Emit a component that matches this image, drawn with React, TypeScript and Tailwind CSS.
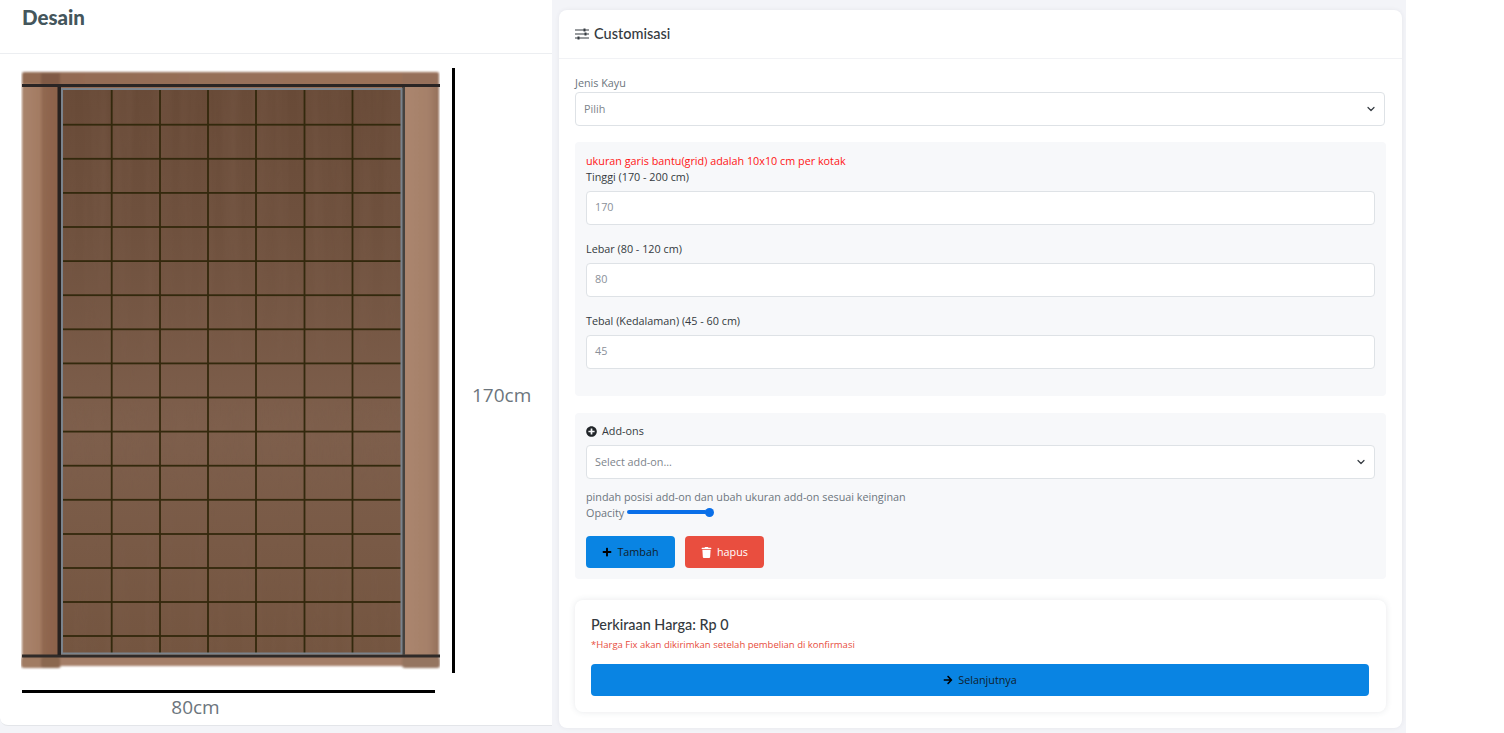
import { FaArrowRight, FaPlus, FaPlusCircle, FaTrash } from 'react-icons/fa'

const bodyFont = "font-['Open_Sans',sans-serif]"
const headFont = "font-['Lato',sans-serif]"

const gridX = [111.7, 160, 208, 256, 304.5, 352.5]
const gridY = [124.7, 158.8, 192.9, 227, 261.1, 295.2, 329.3, 363.4, 397.5, 431.6, 465.7, 499.8, 534, 568, 602, 636]

function Chevron() {
  return (
    <svg width="8" height="8" viewBox="0 0 16 16" fill="none" className="text-[#343a40]">
      <path d="M2 5l6 6 6-6" stroke="currentColor" strokeWidth="2.4" strokeLinecap="round" strokeLinejoin="round" />
    </svg>
  )
}

function Wardrobe() {
  return (
    <svg width="419" height="605" viewBox="21 68 419 605" className="shrink-0">
      <defs>
        <filter id="grain" x="0" y="0" width="100%" height="100%">
          <feTurbulence type="fractalNoise" baseFrequency="0.07 0.003" numOctaves="3" seed="7" />
          <feColorMatrix values="0 0 0 0 0.2  0 0 0 0 0.11  0 0 0 0 0.07  1.4 0 0 0 -0.45" />
        </filter>
        <filter id="soft">
          <feGaussianBlur stdDeviation="1" />
        </filter>
        <linearGradient id="panel" x1="0" y1="0" x2="0" y2="1">
          <stop offset="0" stopColor="#684a37" />
          <stop offset="0.25" stopColor="#6f513e" />
          <stop offset="0.6" stopColor="#7e5f4c" />
          <stop offset="1" stopColor="#745540" />
        </linearGradient>
        <linearGradient id="sideLeft" x1="0" y1="0" x2="1" y2="0">
          <stop offset="0" stopColor="#a9846c" />
          <stop offset="0.48" stopColor="#a37b62" />
          <stop offset="0.55" stopColor="#916850" />
          <stop offset="1" stopColor="#8a604a" />
        </linearGradient>
        <linearGradient id="sideRight" x1="0" y1="0" x2="1" y2="0">
          <stop offset="0" stopColor="#ab866f" />
          <stop offset="0.7" stopColor="#a58069" />
          <stop offset="1" stopColor="#94705a" />
        </linearGradient>
        <linearGradient id="topBand" x1="0" y1="0" x2="1" y2="0">
          <stop offset="0" stopColor="#926a51" />
          <stop offset="0.5" stopColor="#97705a" />
          <stop offset="1" stopColor="#9c7259" />
        </linearGradient>
      </defs>

      <g filter="url(#soft)">
        <rect x="22" y="72" width="417" height="594" rx="2" fill="url(#topBand)" />
        <rect x="22" y="84" width="38" height="572" fill="url(#sideLeft)" />
        <rect x="404" y="84" width="35" height="572" fill="url(#sideRight)" />
        <rect x="41" y="73" width="19" height="12" fill="#805a44" />
        <rect x="402" y="73" width="37" height="12" fill="#96705a" />
        <rect x="60" y="657" width="343" height="9" fill="#a47e67" />
        <rect x="21" y="657" width="40" height="11" rx="3" fill="#a17c64" />
        <rect x="41" y="657" width="19" height="11" rx="3" fill="#8b6750" />
        <rect x="402" y="657" width="38" height="11" rx="3" fill="#957460" />
      </g>

      <rect x="22" y="84" width="418" height="3" fill="#2a2524" />
      <rect x="22" y="654.5" width="418" height="3" fill="#2f2a28" />
      <rect x="57.5" y="87" width="3.5" height="568" fill="#27211f" />
      <rect x="402" y="87" width="3" height="568" fill="#46423f" />

      <rect x="63" y="90" width="338" height="564" fill="url(#panel)" />
      <rect x="63" y="90" width="338" height="564" filter="url(#grain)" opacity="0.45" />

      {gridX.map((x) => (
        <rect key={x} x={x - 0.9} y="90" width="1.8" height="564" fill="#33290d" />
      ))}
      {gridY.map((y) => (
        <rect key={y} x="63" y={y - 0.9} width="338" height="1.8" fill="#33290d" />
      ))}

      <rect x="62" y="89" width="339.5" height="564.5" fill="none" stroke="#7b838c" strokeWidth="2" />
    </svg>
  )
}

function Field({ label, value }: { label: string; value: string }) {
  return (
    <div className="mb-[17px]">
      <label className="mb-[7px] block h-[14px] text-[10.8px] leading-[14px] text-[#343a40]">{label}</label>
      <div className="flex h-[34px] items-center rounded border border-[#dee2e6] bg-white px-2 pb-[2px] text-[10.8px] text-[#8a9099]">
        {value}
      </div>
    </div>
  )
}

export default function App() {
  return (
    <div className={`flex h-[733px] w-full overflow-hidden bg-white ${bodyFont}`}>
      <div className="flex h-full w-[1406px] bg-[#f3f4f8]">
        <section className="h-[726px] w-[552px] rounded-bl-lg border-b border-[#e3e5e9] bg-white">
          <header className="h-[54px] border-b border-[#eceef1] pl-[22px] pt-[4px]">
            <h2 className={`text-[20.5px] font-black leading-[26px] text-[#44565c] ${headFont}`}>Desain</h2>
          </header>
          <div className="pl-[21px] pt-[14px]">
            <div className="flex h-[605px]">
              <Wardrobe />
              <div className="ml-[12px] h-full w-[3px] bg-black" />
              <span className="ml-[17px] self-center pt-[49px] text-[19px] text-[#6c757d]">170cm</span>
            </div>
            <div className="ml-[1px] mt-[17px] h-[3px] w-[413px] bg-black" />
            <div className="w-[349px] text-center text-[19px] leading-[29px] text-[#6c757d]">80cm</div>
          </div>
        </section>

        <section className="ml-[7px] mt-[10px] h-[718px] w-[843px] rounded-lg bg-white shadow-[0_0_4px_rgba(60,70,90,0.08)]">
          <header className="flex h-[49px] items-center gap-[5px] border-b border-[#f1f2f5] pl-4">
            <svg width="14" height="12" viewBox="0 0 14 12" className="text-[#343a40]">
              <path d="M0 2h14M0 6h14M0 10h14" stroke="currentColor" strokeWidth="1.2" />
              <rect x="8.5" y="0.5" width="2" height="3" fill="currentColor" />
              <rect x="9.5" y="4.5" width="2" height="3" fill="currentColor" />
              <rect x="2.5" y="8.5" width="2" height="3" fill="currentColor" />
            </svg>
            <h3 className={`text-[14.5px] font-medium text-[#343a40] ${headFont}`}>Customisasi</h3>
          </header>

          <div className="px-4 pt-[16px]">
            <label className="block h-[17px] text-[10.8px] leading-[16px] text-[#6c757d]">Jenis Kayu</label>
            <div className="mr-[1px] flex h-[34px] items-center justify-between rounded border border-[#dee2e6] bg-white pl-2 pr-[9px] text-[10.8px] text-[#7d848b]">
              Pilih
              <Chevron />
            </div>

            <div className="mt-4 h-[254px] rounded bg-[#f7f8fa] px-[11px] pt-[11px]">
              <p className="h-[17px] text-[10.8px] leading-[16px] text-[#ff1414]">
                ukuran garis bantu(grid) adalah 10x10 cm per kotak
              </p>
              <Field label="Tinggi (170 - 200 cm)" value="170" />
              <Field label="Lebar (80 - 120 cm)" value="80" />
              <Field label="Tebal (Kedalaman) (45 - 60 cm)" value="45" />
            </div>

            <div className="mt-[17px] h-[166px] rounded bg-[#f7f8fa] px-[11px] pt-[10px]">
              <div className="mb-[6px] flex h-[16px] items-center gap-[5px] text-[10.8px] text-[#343a40]">
                <FaPlusCircle className="text-[11px] text-[#212529]" />
                Add-ons
              </div>
              <div className="flex h-[34px] items-center justify-between rounded border border-[#dee2e6] bg-white pl-2 pr-[9px] text-[10.8px] text-[#7d848b]">
                Select add-on...
                <Chevron />
              </div>
              <p className="mt-[10px] h-[16px] text-[10.8px] leading-[16px] text-[#6c757d]">
                pindah posisi add-on dan ubah ukuran add-on sesuai keinginan
              </p>
              <div className="flex h-[16px] items-center text-[10.8px] text-[#6c757d]">
                Opacity
                <div className="mb-[2px] ml-[3px] flex items-center">
                  <div className="h-[4px] w-[80px] rounded-full bg-[#0a6fe8]" />
                  <div className="-ml-[2px] h-[9px] w-[9px] rounded-full bg-[#0a6fe8]" />
                </div>
              </div>
              <div className="mt-[15px] flex gap-[10px]">
                <button className="flex h-[32px] w-[89px] items-center justify-center gap-[5px] rounded bg-[#0984e3] text-[10.8px] text-[#10202c]">
                  <FaPlus className="text-[10px] text-black" />
                  Tambah
                </button>
                <button className="flex h-[32px] w-[79px] items-center justify-center gap-[5px] rounded bg-[#e94e3f] text-[10.8px] text-white">
                  <FaTrash className="text-[11px]" />
                  hapus
                </button>
              </div>
            </div>

            <div className="mt-[21px] h-[112px] rounded-lg bg-white px-4 pt-[15px] shadow-[0_0_6px_rgba(60,70,90,0.12)]">
              <h4 className={`h-[20px] text-[14.4px] font-medium leading-[20px] text-[#343a40] ${headFont}`}>
                Perkiraan Harga: Rp 0
              </h4>
              <p className="mt-[2px] h-[16px] text-[9.5px] leading-[16px] text-[#e74c3c]">
                *Harga Fix akan dikirimkan setelah pembelian di konfirmasi
              </p>
              <button className="mt-[11px] flex h-[32px] w-[778px] items-center justify-center gap-[5px] rounded bg-[#0984e3] text-[10.8px] text-[#10202c]">
                <FaArrowRight className="text-[10px] text-black" />
                Selanjutnya
              </button>
            </div>
          </div>
        </section>
      </div>
    </div>
  )
}
